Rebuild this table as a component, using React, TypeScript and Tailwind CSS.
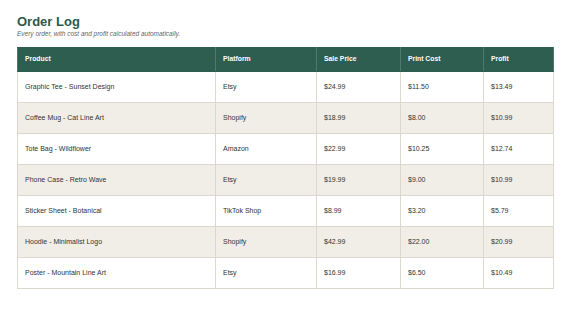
import React from "react";

type Order = {
  product: string;
  platform: string;
  price: string;
  cost: string;
  profit: string;
};

const ORDERS: Order[] = [
  { product: "Graphic Tee - Sunset Design", platform: "Etsy", price: "$24.99", cost: "$11.50", profit: "$13.49" },
  { product: "Coffee Mug - Cat Line Art", platform: "Shopify", price: "$18.99", cost: "$8.00", profit: "$10.99" },
  { product: "Tote Bag - Wildflower", platform: "Amazon", price: "$22.99", cost: "$10.25", profit: "$12.74" },
  { product: "Phone Case - Retro Wave", platform: "Etsy", price: "$19.99", cost: "$9.00", profit: "$10.99" },
  { product: "Sticker Sheet - Botanical", platform: "TikTok Shop", price: "$8.99", cost: "$3.20", profit: "$5.79" },
  { product: "Hoodie - Minimalist Logo", platform: "Shopify", price: "$42.99", cost: "$22.00", profit: "$20.99" },
  { product: "Poster - Mountain Line Art", platform: "Etsy", price: "$16.99", cost: "$6.50", profit: "$10.49" },
];

const HEADERS = ["Product", "Platform", "Sale Price", "Print Cost", "Profit"];
const WIDTHS = ["w-[198px]", "w-[101px]", "w-[84px]", "w-[83px]", "w-[70px]"];

const App: React.FC = () => {
  return (
    <div
      className="w-[570px] h-[310px] bg-white px-[17px] pt-[14px]"
      style={{ fontFamily: '"Liberation Sans", Arial, sans-serif' }}
    >
      <h1 className="text-[13px] leading-[16px] font-bold text-[#2b5a4b]">Order Log</h1>
      <p className="text-[6.5px] leading-[8px] italic text-[#666]">
        Every order, with cost and profit calculated automatically.
      </p>
      <table className="mt-[9px] w-[536px] border-collapse table-fixed">
        <thead>
          <tr className="bg-[#2d5e4f] h-[24px]">
            {HEADERS.map((h, i) => (
              <th
                key={h}
                className={`${WIDTHS[i]} text-left text-white font-bold text-[6.8px] pl-[7px] border border-[#4d7a6b] border-y-[#2d5e4f]`}
              >
                {h}
              </th>
            ))}
          </tr>
        </thead>
        <tbody>
          {ORDERS.map((o, r) => (
            <tr
              key={o.product}
              className={`h-[31px] ${r % 2 === 1 ? "bg-[#f1eee7]" : "bg-white"}`}
            >
              {[o.product, o.platform, o.price, o.cost, o.profit].map((v, i) => (
                <td
                  key={i}
                  className="text-[7px] text-[#333] pl-[7px] border border-[#dcd8cf]"
                >
                  {v}
                </td>
              ))}
            </tr>
          ))}
        </tbody>
      </table>
    </div>
  );
};

export default App;
